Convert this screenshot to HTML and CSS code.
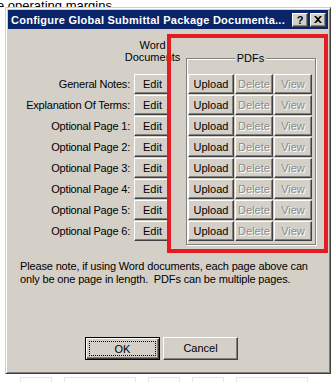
FILE: index.html
```html
<!DOCTYPE html>
<html lang="en">
<head>
  <meta charset="UTF-8" />
  <title>Configure Global Submittal Package Documentation</title>
  <link rel="stylesheet" href="styles.css">
</head>
<body>
  <div class="page-text">e operating margins</div>

  <div class="dialog">
    <div class="titlebar">
      <span class="title">Configure Global Submittal Package Documenta...</span>
      <span class="cap-btn help">?</span>
      <span class="cap-btn close">
        <svg width="8" height="7" viewBox="0 0 8 7"><path d="M0 0h2l2 2 2-2h2L5 3.5 8 7H6L4 5 2 7H0l3-3.5z" fill="#000"/></svg>
      </span>
    </div>

    <div class="dialog-body">
      <div class="form">
        <div class="word-col">
          <div class="word-head">Word<br>Documents</div>
          <span class="label">General Notes:</span><button class="btn">Edit</button>
          <span class="label">Explanation Of Terms:</span><button class="btn">Edit</button>
          <span class="label">Optional Page 1:</span><button class="btn">Edit</button>
          <span class="label">Optional Page 2:</span><button class="btn">Edit</button>
          <span class="label">Optional Page 3:</span><button class="btn">Edit</button>
          <span class="label">Optional Page 4:</span><button class="btn">Edit</button>
          <span class="label">Optional Page 5:</span><button class="btn">Edit</button>
          <span class="label">Optional Page 6:</span><button class="btn">Edit</button>
        </div>

        <fieldset class="pdf-group">
          <legend>PDFs</legend>
          <div class="pdf-rows">
            <button class="btn">Upload</button><button class="btn" disabled>Delete</button><button class="btn" disabled>View</button>
            <button class="btn">Upload</button><button class="btn" disabled>Delete</button><button class="btn" disabled>View</button>
            <button class="btn">Upload</button><button class="btn" disabled>Delete</button><button class="btn" disabled>View</button>
            <button class="btn">Upload</button><button class="btn" disabled>Delete</button><button class="btn" disabled>View</button>
            <button class="btn">Upload</button><button class="btn" disabled>Delete</button><button class="btn" disabled>View</button>
            <button class="btn">Upload</button><button class="btn" disabled>Delete</button><button class="btn" disabled>View</button>
            <button class="btn">Upload</button><button class="btn" disabled>Delete</button><button class="btn" disabled>View</button>
            <button class="btn">Upload</button><button class="btn" disabled>Delete</button><button class="btn" disabled>View</button>
          </div>
        </fieldset>
      </div>

      <p class="note">Please note, if using Word documents, each page above can only be one page in length.&nbsp; PDFs can be multiple pages.</p>

      <div class="actions">
        <button class="btn big default"><span class="focus">OK</span></button>
        <button class="btn big">Cancel</button>
      </div>
    </div>

    <!-- red annotation drawn over the screenshot -->
    <div class="highlight"></div>
  </div>

  <div class="page-table">
    <span class="cell"></span><span class="cell wide"></span><span class="cell"></span><span class="cell"></span><span class="cell wide"></span>
  </div>
</body>
</html>
```

FILE: styles.css
```css
body {
  margin: 0;
  width: 335px;
  height: 382px;
  overflow: hidden;
  background: #fff;
  font-family: "Liberation Sans", Arial, sans-serif;
  font-size: 11px;
  color: #000;
}

.page-text {
  height: 7px;
  overflow: hidden;
  margin-left: -3px;
  font-size: 13px;
  line-height: 11px;
  white-space: nowrap;
}

.dialog {
  position: relative;
  box-sizing: border-box;
  width: 326px;
  height: 367px;
  margin-left: 5px;
  padding: 2px;
  background: #d4d0c8;
  border: 1px solid;
  border-color: #d4d0c8 #404040 #404040 #d4d0c8;
  box-shadow: inset 1px 1px #fff, inset -1px -1px #808080;
}

.titlebar {
  display: flex;
  align-items: center;
  height: 19px;
  padding: 0 2px 0 3px;
  background: #0a246a;
  color: #fff;
}

.title {
  flex: 1;
  font-weight: bold;
  font-size: 11px;
  letter-spacing: 0.25px;
  white-space: nowrap;
  overflow: hidden;
}

.cap-btn {
  display: flex;
  align-items: center;
  justify-content: center;
  box-sizing: border-box;
  width: 16px;
  height: 14px;
  background: #d4d0c8;
  color: #000;
  font-weight: bold;
  font-size: 11px;
  border: 1px solid;
  border-color: #fff #404040 #404040 #fff;
  box-shadow: inset -1px -1px #808080;
}

.cap-btn.close {
  margin-left: 2px;
}

.dialog-body {
  padding: 10px 0 0 0;
}

.form {
  display: flex;
  align-items: flex-start;
  gap: 15px;
}

.word-col {
  display: grid;
  grid-template-columns: 122px 37px;
  grid-template-rows: 34px;
  grid-auto-rows: 20px;
  column-gap: 4px;
  row-gap: 1px;
}

.word-head {
  grid-column: 2;
  justify-self: center;
  text-align: center;
  line-height: 12px;
  white-space: nowrap;
}

.label {
  text-align: right;
  line-height: 21px;
  letter-spacing: -0.2px;
  white-space: nowrap;
}

.btn {
  box-sizing: border-box;
  margin: 0;
  padding: 0 0 1px;
  height: 20px;
  font-family: "Liberation Sans", Arial, sans-serif;
  font-size: 11px;
  color: #000;
  background: #d4d0c8;
  border: 1px solid;
  border-color: #fff #404040 #404040 #fff;
  border-radius: 0;
  box-shadow: inset -1px -1px #808080;
}

.btn:disabled {
  color: #8a8a8a;
  text-shadow: 1px 1px #fff;
}

.pdf-group {
  box-sizing: border-box;
  width: 130px;
  margin: 13px 0 0;
  padding: 10px 2px 3px 1px;
  border: 1px solid #808080;
  box-shadow: inset 1px 1px #fff, 1px 1px #fff;
}

.pdf-group legend {
  margin: 0 auto;
  padding: 0 2px;
  line-height: 12px;
  background: #d4d0c8;
}

.pdf-rows {
  display: grid;
  grid-template-columns: 46px 38px 38px;
  grid-auto-rows: 20px;
  column-gap: 1px;
  row-gap: 1px;
}

.note {
  margin: 15px 0 0 12px;
  width: 300px;
  line-height: 13px;
  letter-spacing: -0.15px;
}

.actions {
  display: flex;
  gap: 3px;
  margin: 51px 0 0 77px;
}

.btn.big {
  width: 75px;
  height: 23px;
}

.btn.default {
  padding: 3px;
  border: 1px solid #000;
  box-shadow: inset 1px 1px #fff, inset -1px -1px #404040, inset -2px -2px #808080;
}

.focus {
  display: flex;
  align-items: center;
  justify-content: center;
  height: 100%;
  border: 1px dotted #000;
  box-sizing: border-box;
}

.highlight {
  position: absolute;
  left: 161px;
  top: 26px;
  width: 161px;
  height: 219px;
  box-sizing: border-box;
  border: 4px solid #e31b23;
  pointer-events: none;
}

.page-table {
  display: flex;
  gap: 12px;
  margin: 3px 0 0 20px;
}

.page-table .cell {
  width: 30px;
  height: 8px;
  border: 1px solid #e4e4e4;
  border-bottom: none;
}

.page-table .cell.wide {
  width: 70px;
}
```
